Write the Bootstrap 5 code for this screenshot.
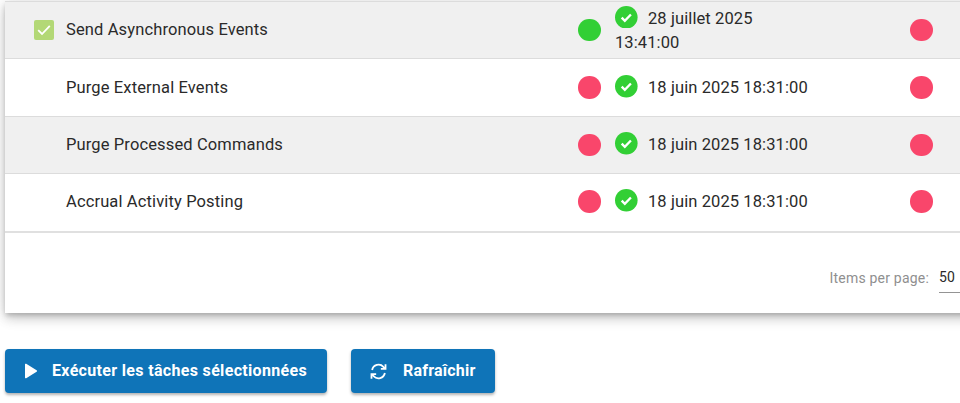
<!DOCTYPE html>
<html lang="fr">
<head>
<meta charset="utf-8">
<title>Tâches</title>
<link href="https://cdn.jsdelivr.net/npm/bootstrap@5.3.0/dist/css/bootstrap.min.css" rel="stylesheet">
<style>
html,body{height:403px;overflow:hidden;background:#fff;font-family:Roboto,"Liberation Sans",sans-serif;color:#2a2a2a}
.sheet{margin:1px -40px 0 5px;height:312px;background:#fff;box-shadow:0 3px 5px -1px rgba(0,0,0,.2),0 6px 10px 0 rgba(0,0,0,.14),0 1px 18px 0 rgba(0,0,0,.12)}
.job-row{display:flex;align-items:center;height:57.4px;border-top:1px solid #dcdcdc;font-size:16.5px;line-height:24px}
.job-row.shade{background:#f0f0f0}
.job-row.last{border-bottom:2px solid #e0e0e0;height:60px;padding-bottom:2px}
.c-check{width:29px;flex:none;margin-left:29px;display:flex}
.c-name{width:512px;flex:none;margin-left:3px;letter-spacing:.13px}
.c-dot{width:37px;flex:none;display:flex}
.c-date{width:295px;flex:none;letter-spacing:.1px}
.c-date.two-line{margin-top:2px}
.dot{width:22.6px;height:22.6px;border-radius:50%;display:block;background:#f9466b}
.dot.ok{background:#32cf35}
.tick{width:22.6px;height:22.6px;display:inline-block;vertical-align:-1px;margin:-4px 10.4px -4px 0}
.two-line .tick{vertical-align:0}
.box{width:20px;height:20px;background:#b3d876;border-radius:2px;display:block}
.pager{display:flex;justify-content:flex-end;align-items:center;height:79px;padding-top:12px;font-size:14px;color:#8f8f8f;letter-spacing:.2px}
.pager-sel{width:61px;margin-left:10px;color:#2a2a2a;border-bottom:1px solid #949494;height:28px;line-height:24px}
.act-bar{padding:36px 0 0 5px}
.act-btn{background:#0f74b8;border:0;border-radius:4px;color:#fff;height:44px;font-family:Roboto,"Liberation Sans",sans-serif;font-weight:700;font-size:16px;letter-spacing:.33px;display:flex;align-items:center;box-shadow:0 2px 3px rgba(0,0,0,.3)}
.act-btn:hover{background:#0f74b8;color:#fff}
.btn-run{width:322px;padding:0 0 0 19px;gap:14px}
.btn-ref{width:144px;padding:0 0 0 19px;gap:16px;margin-left:24px;letter-spacing:.2px}
</style>
</head>
<body>
<div class="sheet overflow-hidden">
  <div class="job-row shade">
    <div class="c-check"><svg class="box" viewBox="0 0 20 20"><path d="M4.2 10.2 8 14l7.8-8.2" fill="none" stroke="#fff" stroke-width="1.8"/></svg></div>
    <div class="c-name">Send Asynchronous Events</div>
    <div class="c-dot"><span class="dot ok"></span></div>
    <div class="c-date two-line"><svg class="tick" viewBox="0 0 23 23"><circle cx="11.5" cy="11.5" r="11.5" fill="#32cf35"/><path d="M6.8 11.8 10 15l6.2-6.3" fill="none" stroke="#fff" stroke-width="2.4"/></svg>28 juillet 2025<br>13:41:00</div>
    <div class="c-dot"><span class="dot"></span></div>
  </div>
  <div class="job-row">
    <div class="c-check"></div>
    <div class="c-name">Purge External Events</div>
    <div class="c-dot"><span class="dot"></span></div>
    <div class="c-date"><svg class="tick" viewBox="0 0 23 23"><circle cx="11.5" cy="11.5" r="11.5" fill="#32cf35"/><path d="M6.8 11.8 10 15l6.2-6.3" fill="none" stroke="#fff" stroke-width="2.4"/></svg>18 juin 2025 18:31:00</div>
    <div class="c-dot"><span class="dot"></span></div>
  </div>
  <div class="job-row shade">
    <div class="c-check"></div>
    <div class="c-name">Purge Processed Commands</div>
    <div class="c-dot"><span class="dot"></span></div>
    <div class="c-date"><svg class="tick" viewBox="0 0 23 23"><circle cx="11.5" cy="11.5" r="11.5" fill="#32cf35"/><path d="M6.8 11.8 10 15l6.2-6.3" fill="none" stroke="#fff" stroke-width="2.4"/></svg>18 juin 2025 18:31:00</div>
    <div class="c-dot"><span class="dot"></span></div>
  </div>
  <div class="job-row last">
    <div class="c-check"></div>
    <div class="c-name">Accrual Activity Posting</div>
    <div class="c-dot"><span class="dot"></span></div>
    <div class="c-date"><svg class="tick" viewBox="0 0 23 23"><circle cx="11.5" cy="11.5" r="11.5" fill="#32cf35"/><path d="M6.8 11.8 10 15l6.2-6.3" fill="none" stroke="#fff" stroke-width="2.4"/></svg>18 juin 2025 18:31:00</div>
    <div class="c-dot"><span class="dot"></span></div>
  </div>
  <div class="pager"><span>Items per page:</span><div class="pager-sel">50</div></div>
</div>
<div class="act-bar d-flex">
  <button class="btn act-btn btn-run" type="button"><svg width="14" height="16" viewBox="0 0 14 16"><path d="M1 1.5v13a.8.8 0 0 0 1.2.7L12.6 8.7a.8.8 0 0 0 0-1.4L2.2.8A.8.8 0 0 0 1 1.5z" fill="#fff"/></svg>Exécuter les tâches sélectionnées</button>
  <button class="btn act-btn btn-ref" type="button"><svg width="17" height="17" viewBox="0 0 16 16"><path d="M2 6.6A6.2 6.2 0 0 1 12.6 3.6L14 5M14 9.4A6.2 6.2 0 0 1 3.4 12.4L2 11" fill="none" stroke="#fff" stroke-width="1.7"/><path d="M14.6 1.2V5.6H10.2M1.4 14.8V10.4H5.8" fill="none" stroke="#fff" stroke-width="1.7"/></svg>Rafraîchir</button>
</div>
<script src="https://cdn.jsdelivr.net/npm/bootstrap@5.3.0/dist/js/bootstrap.bundle.min.js"></script>
</body>
</html>
